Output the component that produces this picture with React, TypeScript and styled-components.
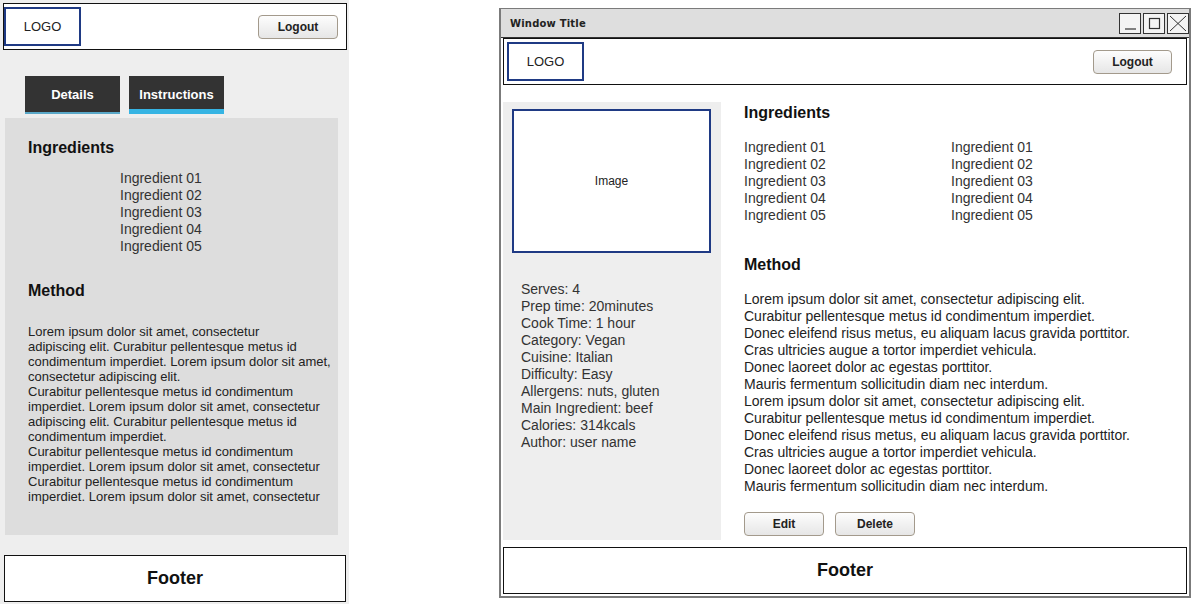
import React from 'react';
import styled, { createGlobalStyle } from 'styled-components';

const GlobalStyle = createGlobalStyle`
  html, body {
    margin: 0;
    padding: 0;
    background: #ffffff;
    font-family: "Liberation Sans", Arial, sans-serif;
  }
`;

const Page = styled.div`
  display: flex;
  align-items: flex-start;
  width: 1194px;
  height: 604px;
  overflow: hidden;
`;

/* ---------- mobile mockup ---------- */

const Mobile = styled.div`
  width: 349px;
  height: 604px;
  background: #eeeeee;
  padding: 3px 2px 0 3px;
  box-sizing: border-box;
  display: flex;
  flex-direction: column;
`;

const Header = styled.div<{ $inset?: number }>`
  height: 47px;
  box-sizing: border-box;
  border: 1px solid #111;
  background: #fff;
  display: flex;
  align-items: center;
  justify-content: space-between;
  padding: 0 ${p => p.$inset ?? 8}px 0 ${p => (p.$inset ? 3 : 0)}px;
`;

const LogoBox = styled.div`
  width: 77px;
  height: 39px;
  box-sizing: border-box;
  border: 2px solid #1f3a84;
  display: flex;
  align-items: center;
  justify-content: center;
  font-size: 13px;
  color: #222;
`;

const Button = styled.button<{ $w?: number }>`
  width: ${p => p.$w ?? 80}px;
  height: 24px;
  border: 1px solid #a39a8c;
  border-radius: 4px;
  background: linear-gradient(#fdfdfd, #e6e6e6);
  font-family: "Liberation Sans", Arial, sans-serif;
  font-size: 12px;
  font-weight: bold;
  color: #222;
  padding: 0;
`;

const Tabs = styled.div`
  display: flex;
  gap: 9px;
  margin: 26px 0 4px 22px;
`;

const Tab = styled.div<{ $active?: boolean }>`
  width: 95px;
  height: 38px;
  box-sizing: border-box;
  background: #333333;
  border-bottom: ${p => (p.$active ? '5px solid #36b4e3' : '2px solid #5aa8c8')};
  color: #fff;
  font-size: 13px;
  font-weight: bold;
  display: flex;
  align-items: center;
  justify-content: center;
  padding-top: ${p => (p.$active ? 3 : 0)}px;
`;

const Panel = styled.div`
  margin-left: 2px;
  width: 333px;
  height: 417px;
  background: #dddddd;
  padding: 20px 0 0 23px;
  box-sizing: border-box;
`;

const Heading = styled.div<{ $mt?: number }>`
  font-size: 16px;
  font-weight: bold;
  line-height: 20px;
  color: #111;
  margin-top: ${p => p.$mt ?? 0}px;
`;

const List = styled.div<{ $mt: number; $ml?: number }>`
  margin-top: ${p => p.$mt}px;
  margin-left: ${p => p.$ml ?? 0}px;
  font-size: 14px;
  line-height: 17px;
  color: #333;
`;

const SmallText = styled.div<{ $mt: number }>`
  margin-top: ${p => p.$mt}px;
  font-size: 13px;
  line-height: 15px;
  color: #222;
  white-space: nowrap;
`;

const Footer = styled.div`
  height: 47px;
  box-sizing: border-box;
  border: 1px solid #111;
  background: #fff;
  display: flex;
  align-items: center;
  justify-content: center;
  font-size: 18px;
  font-weight: bold;
  color: #111;
`;

const MobileFooter = styled(Footer)`
  margin: 20px 1px 0 1px;
`;

/* ---------- desktop window ---------- */

const Window = styled.div`
  margin: 8px 0 0 150px;
  width: 692px;
  height: 590px;
  box-sizing: border-box;
  border: 2px solid #7b7b7b;
  border-top-width: 1px;
  background: #fff;
  display: flex;
  flex-direction: column;
`;

const TitleBar = styled.div`
  height: 29px;
  box-sizing: border-box;
  background: #dedede;
  border-bottom: 1px solid #333;
  display: flex;
  align-items: center;
  justify-content: space-between;
  padding: 0 0 0 9px;
`;

const Title = styled.span`
  font-family: "DejaVu Sans", sans-serif;
  font-size: 10px;
  font-weight: bold;
  color: #222;
  letter-spacing: 0.2px;
`;

const WinButtons = styled.div`
  display: flex;
  gap: 2px;
`;

const WinButton = styled.div`
  width: 22px;
  height: 21px;
  box-sizing: border-box;
  border: 1px solid #333;
  background: #f4f4f4;
  display: flex;
  align-items: center;
  justify-content: center;
`;

const WinBody = styled.div`
  flex: 1;
  display: flex;
  flex-direction: column;
  padding: 0 2px 2px 2px;
`;

const Main = styled.div`
  flex: 1;
  display: flex;
  padding-top: 17px;
`;

const Sidebar = styled.div`
  width: 218px;
  margin-bottom: 7px;
  background: #eeeeee;
  padding: 7px 0 0 9px;
  box-sizing: border-box;
`;

const ImageBox = styled.div`
  width: 199px;
  height: 144px;
  box-sizing: border-box;
  border: 2px solid #1f3a84;
  background: #fff;
  display: flex;
  align-items: center;
  justify-content: center;
  font-size: 12px;
  color: #222;
`;

const Content = styled.div`
  flex: 1;
  padding: 1px 0 0 23px;
`;

const Columns = styled.div`
  display: flex;
  margin-top: 16px;
`;

const Column = styled.div`
  width: 207px;
  font-size: 14px;
  line-height: 17px;
  color: #333;
`;

const Paragraph = styled.div`
  margin-top: 16px;
  font-size: 14px;
  line-height: 17px;
  color: #222;
`;

const ButtonRow = styled.div`
  display: flex;
  gap: 11px;
  margin-top: 17px;
`;

const ingredients = ['Ingredient 01', 'Ingredient 02', 'Ingredient 03', 'Ingredient 04', 'Ingredient 05'];

const mobileMethod = [
  'Lorem ipsum dolor sit amet, consectetur',
  'adipiscing elit. Curabitur pellentesque metus id',
  'condimentum imperdiet. Lorem ipsum dolor sit amet,',
  'consectetur adipiscing elit.',
  'Curabitur pellentesque metus id condimentum',
  'imperdiet. Lorem ipsum dolor sit amet, consectetur',
  'adipiscing elit. Curabitur pellentesque metus id',
  'condimentum imperdiet.',
  'Curabitur pellentesque metus id condimentum',
  'imperdiet. Lorem ipsum dolor sit amet, consectetur',
  'Curabitur pellentesque metus id condimentum',
  'imperdiet. Lorem ipsum dolor sit amet, consectetur',
];

const methodBlock = [
  'Lorem ipsum dolor sit amet, consectetur adipiscing elit.',
  'Curabitur pellentesque metus id condimentum imperdiet.',
  'Donec eleifend risus metus, eu aliquam lacus gravida porttitor.',
  'Cras ultricies augue a tortor imperdiet vehicula.',
  'Donec laoreet dolor ac egestas porttitor.',
  'Mauris fermentum sollicitudin diam nec interdum.',
];

const details = [
  'Serves: 4',
  'Prep time: 20minutes',
  'Cook Time: 1 hour',
  'Category: Vegan',
  'Cuisine: Italian',
  'Difficulty: Easy',
  'Allergens: nuts, gluten',
  'Main Ingredient: beef',
  'Calories: 314kcals',
  'Author: user name',
];

const Lines = ({ items }: { items: string[] }) => (
  <>
    {items.map((t, i) => (
      <div key={i}>{t}</div>
    ))}
  </>
);

export default function App() {
  return (
    <Page>
      <GlobalStyle />
      <Mobile>
        <Header>
          <LogoBox>LOGO</LogoBox>
          <Button>Logout</Button>
        </Header>
        <Tabs>
          <Tab>Details</Tab>
          <Tab $active>Instructions</Tab>
        </Tabs>
        <Panel>
          <Heading>Ingredients</Heading>
          <List $mt={12} $ml={92}>
            <Lines items={ingredients} />
          </List>
          <Heading $mt={26}>Method</Heading>
          <SmallText $mt={23}>
            <Lines items={mobileMethod} />
          </SmallText>
        </Panel>
        <MobileFooter>Footer</MobileFooter>
      </Mobile>

      <Window>
        <TitleBar>
          <Title>Window Title</Title>
          <WinButtons>
            <WinButton>
              <svg width="13" height="13" viewBox="0 0 13 13">
                <line x1="1" y1="12" x2="12" y2="12" stroke="#333" strokeWidth="1.2" />
              </svg>
            </WinButton>
            <WinButton>
              <svg width="13" height="13" viewBox="0 0 13 13">
                <rect x="1.5" y="1.5" width="10" height="10" fill="none" stroke="#333" strokeWidth="1.2" />
              </svg>
            </WinButton>
            <WinButton>
              <svg width="18" height="17" viewBox="0 0 18 17">
                <path d="M1 1 L17 16 M17 1 L1 16" stroke="#333" strokeWidth="1" />
              </svg>
            </WinButton>
          </WinButtons>
        </TitleBar>
        <WinBody>
          <Header $inset={14}>
            <LogoBox>LOGO</LogoBox>
            <Button $w={79}>Logout</Button>
          </Header>
          <Main>
            <Sidebar>
              <ImageBox>Image</ImageBox>
              <List $mt={28} $ml={9}>
                <Lines items={details} />
              </List>
            </Sidebar>
            <Content>
              <Heading>Ingredients</Heading>
              <Columns>
                <Column>
                  <Lines items={ingredients} />
                </Column>
                <Column>
                  <Lines items={ingredients} />
                </Column>
              </Columns>
              <Heading $mt={31}>Method</Heading>
              <Paragraph>
                <Lines items={[...methodBlock, ...methodBlock]} />
              </Paragraph>
              <ButtonRow>
                <Button>Edit</Button>
                <Button>Delete</Button>
              </ButtonRow>
            </Content>
          </Main>
          <Footer>Footer</Footer>
        </WinBody>
      </Window>
    </Page>
  );
}
